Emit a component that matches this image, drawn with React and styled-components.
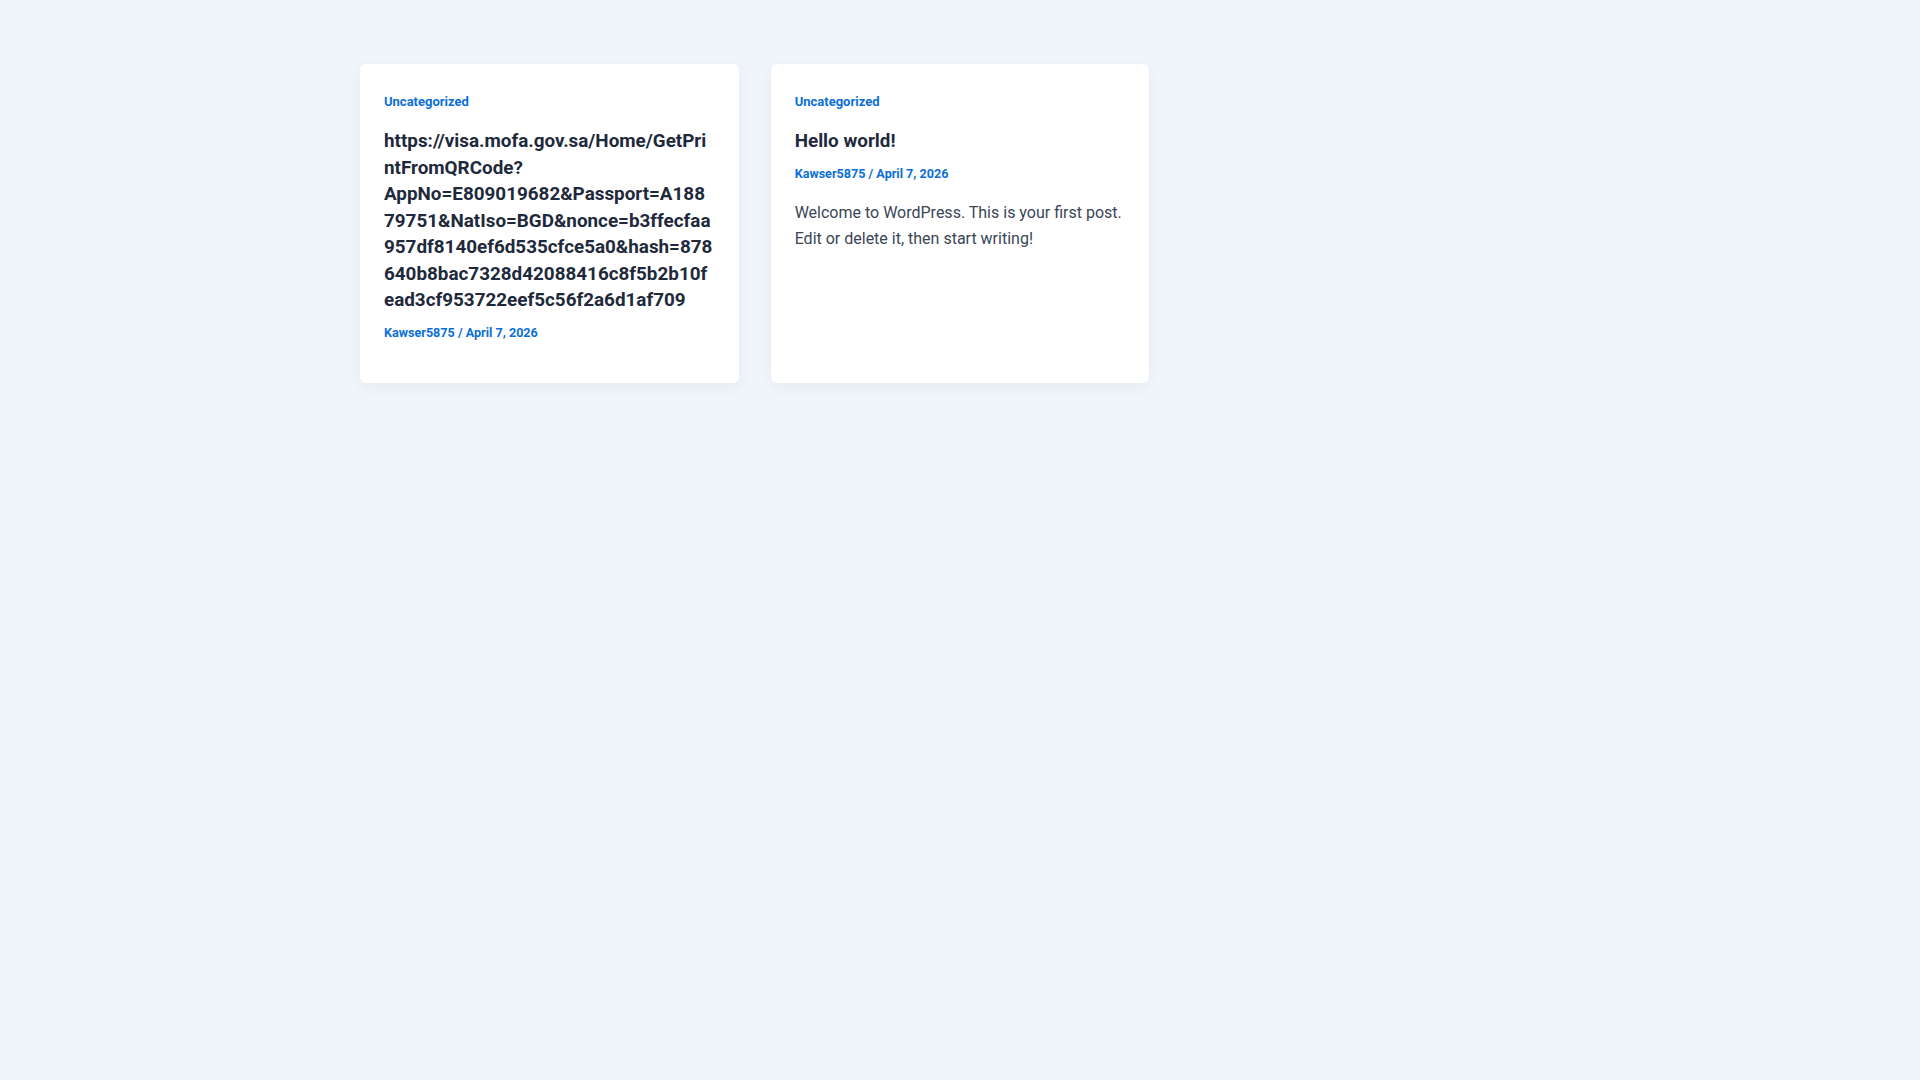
import React from 'react';
import styled, { createGlobalStyle } from 'styled-components';

const GlobalStyle = createGlobalStyle`
  html, body {
    margin: 0;
    padding: 0;
    background: #f0f5fa;
    font-family: Roboto, "Liberation Sans", sans-serif;
  }
  * { box-sizing: border-box; }
`;

const Page = styled.main`
  min-height: 100vh;
  padding-top: 64px;
`;

const Grid = styled.div`
  width: 1200px;
  margin: 0 auto;
  display: grid;
  grid-template-columns: repeat(3, minmax(0, 1fr));
  gap: 32px;
  align-items: stretch;
`;

const Card = styled.article`
  background: #fff;
  border-radius: 6px;
  box-shadow: 0 4px 14px rgba(30, 60, 110, 0.06);
  padding: 28px 24px 40px;
  display: flex;
  flex-direction: column;
  min-width: 0;
`;

const Category = styled.a`
  font-size: 13px;
  font-weight: 700;
  line-height: 20px;
  color: #0b6fd6;
  text-decoration: none;
`;

const Title = styled.h2`
  margin: 16px 0 0;
  font-size: 18.85px;
  font-weight: 700;
  line-height: 26.5px;
  color: #1e293b;
  overflow-wrap: break-word;
`;

const Meta = styled.div`
  margin-top: 9px;
  font-size: 12.6px;
  font-weight: 700;
  line-height: 20px;
  color: #0b6fd6;
`;

const Excerpt = styled.p`
  margin: 16px 0 0;
  font-size: 16px;
  line-height: 26px;
  color: #3a4556;
`;

const posts = [
  {
    title:
      'https://visa.mofa.gov.sa/Home/GetPrintFromQRCode?AppNo=E809019682&Passport=A18879751&NatIso=BGD&nonce=b3ffecfaa957df8140ef6d535cfce5a0&hash=878640b8bac7328d42088416c8f5b2b10fead3cf953722eef5c56f2a6d1af709',
    excerpt: null,
  },
  {
    title: 'Hello world!',
    excerpt: 'Welcome to WordPress. This is your first post. Edit or delete it, then start writing!',
  },
];

export default function App() {
  return (
    <Page>
      <GlobalStyle />
      <Grid>
        {posts.map((post, i) => (
          <Card key={i}>
            <Category href="#">Uncategorized</Category>
            <Title>{post.title}</Title>
            <Meta>Kawser5875 / April 7, 2026</Meta>
            {post.excerpt && <Excerpt>{post.excerpt}</Excerpt>}
          </Card>
        ))}
      </Grid>
    </Page>
  );
}
